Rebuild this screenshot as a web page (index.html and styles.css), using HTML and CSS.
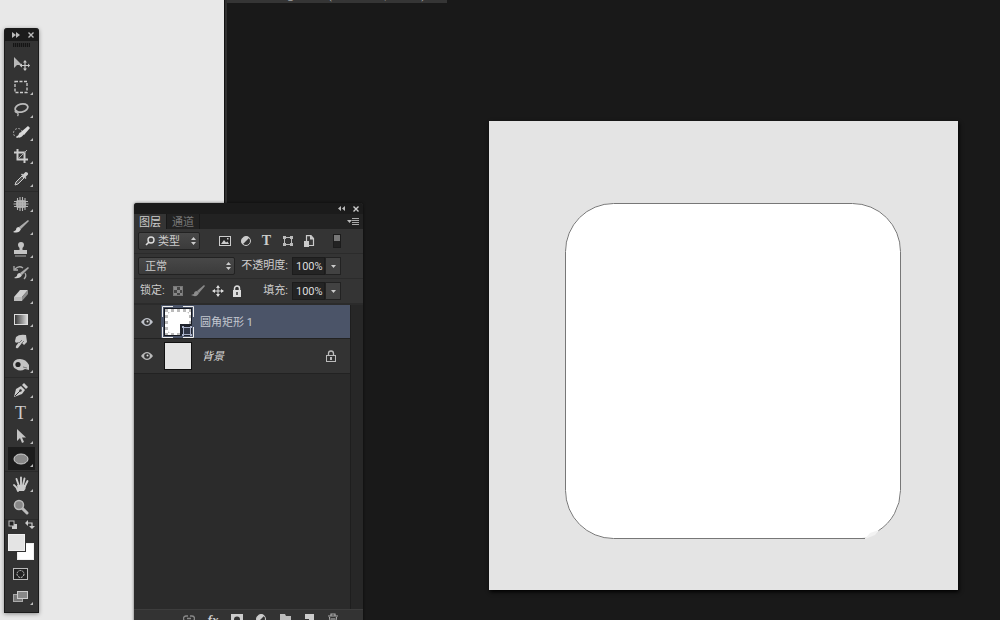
FILE: index.html
```html
<!DOCTYPE html>
<html lang="zh-CN">
<head>
<meta charset="utf-8">
<title>图层</title>
<link rel="stylesheet" href="styles.css">
</head>
<body>
<main class="desktop">
  <section class="document" aria-label="文档">
    <div class="doc-tabs"><span class="doc-tab">未标题-1 @ 100% (圆角矩形 1, RGB/8) *</span></div>
    <svg class="artboard" viewBox="0 0 469 469" role="img" aria-label="圆角矩形">
      <rect width="469" height="469" fill="#e4e4e4"/>
      <rect x="76" y="82" width="336" height="336" rx="49" fill="#fff"/>
      <path d="M376 417.500H124.500A48 48 0 0 1 76.500 369.500V130.500A48 48 0 0 1 124.500 82.500H363.500A48 48 0 0 1 411.500 130.500V369.500A48 48 0 0 1 389 410" fill="none" stroke="#777"/>
      <path d="M376 418L381 412L390 409L386 414Z" fill="#f2f2f2"/>
    </svg>
  </section>

  <aside class="toolbox" aria-label="工具">
    <header class="bar">
      <button class="mini" aria-label="展开"><svg width="8" height="6" viewBox="0 0 8 6"><path d="M0 0L4 3L0 6ZM4 0L8 3L4 6Z" fill="#bbb"/></svg></button>
      <button class="mini" aria-label="关闭"><svg width="6" height="6" viewBox="0 0 6 6"><path d="M.5 .5L5.500 5.500M5.500 .5L.5 5.500" stroke="#bbb" stroke-width="1.400"/></svg></button>
    </header>
    <div class="grip"></div>
    <div class="group">
      <button class="tool plain" aria-label="移动"><svg viewBox="0 0 18 18"><path d="M2 2V13L5 10H10Z" fill="#b8b8b8"/><path d="M13 6V15M8.500 10.500H17.500" stroke="#c8c8c8" stroke-width="1.200"/><path d="M13 5L15 7.500H11ZM13 16L11 13.500H15ZM7.500 10.500L10 8.500V12.500ZM18 10.500L16 8.500V12.500Z" fill="#c8c8c8"/></svg></button>
      <button class="tool" aria-label="矩形选框"><svg viewBox="0 0 18 18"><rect x="3" y="3.500" width="12" height="11" fill="none" stroke="#ccc" stroke-width="1.300" stroke-dasharray="3 1.500"/></svg></button>
      <button class="tool" aria-label="套索"><svg viewBox="0 0 18 18"><ellipse cx="9.500" cy="7" rx="6.500" ry="4" transform="rotate(-14 9.500 7)" fill="none" stroke="#bbb" stroke-width="1.800"/><path d="M4 9Q2 11 4.500 11.500Q6.500 10.500 4 9.500M5 11.500Q7 13 5.500 15" fill="none" stroke="#bbb" stroke-width="1.300"/></svg></button>
      <button class="tool" aria-label="快速选择"><svg viewBox="0 0 18 18"><circle cx="6" cy="9" r="4.500" fill="none" stroke="#aaa" stroke-dasharray="2 1.500"/><path d="M16 2L9 8L12 11L18 4Z" fill="#ddd"/><path d="M10 8Q7 8 6.500 11L4 13Q9 15 12 10Z" fill="#d8d8d8"/></svg></button>
      <button class="tool" aria-label="裁剪"><svg viewBox="0 0 18 18"><path d="M5.500 2V12.500H16M2 5.500H12.500V16" fill="none" stroke="#ccc" stroke-width="2"/><path d="M6 12L15 3" stroke="#aaa"/></svg></button>
      <button class="tool" aria-label="吸管"><svg viewBox="0 0 18 18"><path d="M3 15L4 12L10 6L12 8L6 14Z" fill="#555" stroke="#ccc"/><path d="M9 4.500L13.500 9L14.500 8L13.500 7L16 4.500Q16.500 2 13.500 2L11 4.500L10 3.500Z" fill="#ccc"/></svg></button>
    </div>
    <div class="group">
      <button class="tool" aria-label="修复"><svg viewBox="0 0 18 18"><rect x="4" y="5" width="10" height="8" rx="2" fill="#a0a0a0"/><path d="M5.500 3V15M8 2V16M10.500 2V16M13 3V15M2 6.500H16M1.500 9H16.500M2 11.500H16" stroke="#b5b5b5" stroke-width="1.100"/></svg></button>
      <button class="tool" aria-label="画笔"><svg viewBox="0 0 18 18"><path d="M16 2L7 9L9 11L17 3Z" fill="#aaa"/><path d="M7 9Q4 9 4 12L1 14Q7 16 9 11Z" fill="#d5d5d5"/></svg></button>
      <button class="tool" aria-label="图章"><svg viewBox="0 0 18 18"><path d="M6 4A3 3 0 0 1 12 4Q12 5.500 10.500 7V9H15V13H2V9H7.500V7Q6 5.500 6 4Z" fill="#c4c4c4"/><path d="M3 15H14" stroke="#aaa"/></svg></button>
      <button class="tool" aria-label="历史画笔"><svg viewBox="0 0 18 18"><path d="M3 5Q7 1 11 4M2 2V6H6M13 9Q15 12 12 15" fill="none" stroke="#aaa" stroke-width="1.300"/><path d="M16 3L8 9L10 11L17 4Z" fill="#aaa"/><path d="M8 9Q5 9 5 12L2 14Q8 15 10 11Z" fill="#ccc"/></svg></button>
      <button class="tool" aria-label="橡皮擦"><svg viewBox="0 0 18 18"><path d="M8 3H16L10 10H2Z" fill="#d0d0d0"/><path d="M2 10H10V14H2Z" fill="#bbb"/><path d="M10 10L16 3V7L10 14Z" fill="#8e8e8e"/></svg></button>
      <button class="tool" aria-label="渐变"><svg viewBox="0 0 18 18"><defs><linearGradient id="fade"><stop stop-color="#333"/><stop offset="1" stop-color="#ddd"/></linearGradient></defs><rect x="2.500" y="4.500" width="13" height="10" fill="url(#fade)" stroke="#ddd"/></svg></button>
      <button class="tool" aria-label="涂抹"><svg viewBox="0 0 18 18"><path d="M4 4Q7 1 14 2L15 9L12 12L10 10L6 15Q3 16 4 13L7 9Q3 11 3 8Z" fill="#c8c8c8"/><path d="M7 10L10 7M9 11L12 8" stroke="#777"/></svg></button>
      <button class="tool" aria-label="海绵"><svg viewBox="0 0 18 18"><path d="M1 8Q2 3 8 3Q14 3 17 9V14L13 13Q8 16 4 13Q1 12 1 8Z" fill="#c4c4c4"/><circle cx="6" cy="8.500" r="2.600" fill="#222"/><path d="M11 11L15 12" stroke="#777"/></svg></button>
    </div>
    <div class="group">
      <button class="tool" aria-label="钢笔"><svg viewBox="0 0 18 18"><path d="M2 16L4 8L9 5L13 9L10 13Z" fill="#ccc"/><path d="M10 4L12 2L16 6L14 8Z" fill="#ccc"/><path d="M3 15L8 10" stroke="#333"/><circle cx="8.500" cy="9.500" r="1.200" fill="#333"/></svg></button>
      <button class="tool letter" aria-label="文字">T</button>
      <button class="tool" aria-label="路径选择"><svg viewBox="0 0 18 18"><path d="M5 2V14L8 11L10 16L12 15L10 10.500H14Z" fill="#c4c4c4"/></svg></button>
      <button class="tool active" aria-label="椭圆"><svg viewBox="0 0 18 18"><ellipse cx="9" cy="9" rx="7" ry="5" fill="#888" stroke="#d0d0d0"/></svg></button>
    </div>
    <div class="group">
      <button class="tool" aria-label="抓手"><svg viewBox="0 0 18 18"><path d="M6 16Q5 12 2 10M7 11L4.500 4M9 10V2.500M11 10L12.500 3.500M13 11L15.500 6" stroke="#ccc" stroke-width="1.900" stroke-linecap="round" fill="none"/><path d="M5 10H14Q14 14 12 16H6Z" fill="#ccc"/></svg></button>
      <button class="tool plain" aria-label="缩放"><svg viewBox="0 0 18 18"><path d="M10 10L15 15" stroke="#bbb" stroke-width="3" stroke-linecap="round"/><circle cx="7" cy="7" r="4.500" fill="#888" stroke="#bbb" stroke-width="1.500"/></svg></button>
    </div>
    <div class="colors">
      <div class="color-actions">
        <button class="mini" aria-label="默认颜色"><svg width="10" height="9" viewBox="0 0 10 9"><path d="M4 4H9V9H4Z" fill="#ccc"/><rect x="1" y="1" width="5" height="5" fill="#222" stroke="#bbb"/></svg></button>
        <button class="mini" aria-label="切换颜色"><svg width="10" height="9" viewBox="0 0 10 9"><path d="M2 3H7V7" fill="none" stroke="#ccc" stroke-width="1.200"/><path d="M0 3L3 0V6ZM7 9L4 6H10Z" fill="#ccc"/></svg></button>
      </div>
      <div class="swatches">
        <button class="swatch back" aria-label="背景色"></button>
        <button class="swatch front" aria-label="前景色"></button>
      </div>
    </div>
    <button class="tool plain" aria-label="快速蒙版"><svg viewBox="0 0 18 18"><rect x="1.500" y="3.500" width="14" height="11" fill="#222" stroke="#bbb"/><circle cx="8.500" cy="9" r="3.500" fill="#222" stroke="#ccc" stroke-dasharray="2 1"/></svg></button>
    <button class="tool" aria-label="屏幕模式"><svg viewBox="0 0 18 18"><rect x="1.500" y="6.500" width="9" height="7" fill="#777" stroke="#aaa"/><rect x="5.500" y="3.500" width="10" height="7" fill="#888" stroke="#ccc"/></svg></button>
  </aside>

  <section class="panel" aria-label="图层">
    <header class="bar">
      <button class="mini" aria-label="折叠"><svg width="7" height="5" viewBox="0 0 7 5"><path d="M3 0V5L0 2.500ZM7 0V5L4 2.500Z" fill="#bbb"/></svg></button>
      <button class="mini" aria-label="关闭面板"><svg width="6" height="6" viewBox="0 0 6 6"><path d="M.5 .5L5.500 5.500M5.500 .5L.5 5.500" stroke="#ccc" stroke-width="1.400"/></svg></button>
    </header>
    <nav class="tabs">
      <button class="tab current">图层</button>
      <button class="tab">通道</button>
      <button class="mini menu" aria-label="面板菜单"><svg width="12" height="8" viewBox="0 0 12 8"><path d="M0 2H5L2.500 5Z" fill="#bbb"/><path d="M5 .5H12M5 2.500H12M5 4.500H12M5 6.500H12" stroke="#aaa"/></svg></button>
    </nav>
    <div class="row filters">
      <label class="pick kind">
        <svg width="10" height="10" viewBox="0 0 10 10"><circle cx="6" cy="4" r="3" fill="none" stroke="#ddd" stroke-width="1.400"/><path d="M4 6L1 9" stroke="#ddd" stroke-width="1.600"/></svg>
        <select aria-label="滤镜类型"><option>类型</option></select>
        <svg width="5" height="8" viewBox="0 0 5 8"><path d="M0 3L2.500 0L5 3ZM0 5H5L2.500 8Z" fill="#ccc"/></svg>
      </label>
      <div class="filter-icons">
        <button class="icon" aria-label="像素图层"><svg viewBox="0 0 12 12"><rect x=".5" y="1.500" width="11" height="9" fill="#282828" stroke="#ccc"/><path d="M2 9L5 5L7 7.500L8.500 6.500L10 9Z" fill="#ccc"/><path d="M8 3H9.500V4.500H8Z" fill="#ccc"/></svg></button>
        <button class="icon" aria-label="调整图层"><svg viewBox="0 0 12 12"><circle cx="6" cy="6" r="4.500" fill="#333" stroke="#ccc"/><path d="M9.500 2.500A5 5 0 0 0 2.500 9.500Z" fill="#ccc"/></svg></button>
        <button class="icon small-letter" aria-label="文字图层">T</button>
        <button class="icon" aria-label="形状图层"><svg viewBox="0 0 12 12"><rect x="2.500" y="2.500" width="7" height="7" fill="none" stroke="#bbb"/><path d="M1 1H4V4H1ZM8 1H11V4H8ZM1 8H4V11H1ZM8 8H11V11H8Z" fill="#bbb"/></svg></button>
        <button class="icon" aria-label="智能对象"><svg viewBox="0 0 12 12"><path d="M3.500 6V.600H8L10.500 3.500V10.500H5" fill="#3a3a3a" stroke="#ccc" stroke-width="1.200"/><path d="M7 0V4.500H11Z" fill="#ccc"/><path d="M1 6H6V12H1Z" fill="#ccc"/></svg></button>
      </div>
      <button class="toggle" aria-label="滤镜开关"></button>
    </div>
    <div class="row">
      <label class="pick blend">
        <select aria-label="混合模式"><option>正常</option></select>
        <svg width="5" height="8" viewBox="0 0 5 8"><path d="M0 3L2.500 0L5 3ZM0 5H5L2.500 8Z" fill="#ccc"/></svg>
      </label>
      <div class="amount">
        <label for="opacity">不透明度:</label>
        <input id="opacity" type="text" value="100%">
        <button class="drop" aria-label="调整不透明度"><svg width="5" height="3" viewBox="0 0 5 3"><path d="M0 0H5L2.500 3Z" fill="#ccc"/></svg></button>
      </div>
    </div>
    <div class="row">
      <div class="locks">
        <span>锁定:</span>
        <button class="icon" aria-label="锁定透明像素"><svg viewBox="0 0 12 12"><rect x="1.500" y="1.500" width="9" height="9" fill="#444" stroke="#777"/><path d="M2 2H5V5H2ZM5 5H8V8H5ZM8 2H10V5H8ZM2 8H5V10H2ZM8 8H10V10H8Z" fill="#888"/></svg></button>
        <button class="icon brush" aria-label="锁定图像像素"><svg viewBox="0 0 14 12"><path d="M13 0L6 6L8 8L14 1Z" fill="#888"/><path d="M6 6Q3 6 3 9L0 10Q6 13 8 8Z" fill="#8c8c8c"/></svg></button>
        <button class="icon" aria-label="锁定位置"><svg viewBox="0 0 12 12"><path d="M6 1V11M1 6H11" stroke="#ddd"/><path d="M6 0L8 3H4ZM6 12L4 9H8ZM0 6L3 4V8ZM12 6L9 4V8Z" fill="#ddd"/></svg></button>
        <button class="icon" aria-label="锁定全部"><svg viewBox="0 0 12 12"><path d="M3.500 6V3.500A2.500 2.500 0 0 1 8.500 3.500V6" fill="none" stroke="#ddd" stroke-width="1.500"/><path d="M2 5H10V12H2Z" fill="#ddd"/><path d="M6 7V10" stroke="#333" stroke-width="1.500"/></svg></button>
      </div>
      <div class="amount">
        <label for="fill">填充:</label>
        <input id="fill" type="text" value="100%">
        <button class="drop" aria-label="调整填充"><svg width="5" height="3" viewBox="0 0 5 3"><path d="M0 0H5L2.500 3Z" fill="#ccc"/></svg></button>
      </div>
    </div>
    <div class="list-area">
      <ul class="layers">
        <li class="layer selected">
          <button class="eye" aria-label="切换可见性"><svg viewBox="0 0 12 10"><path d="M0 5Q6 -3 12 5Q6 13 0 5Z" fill="#c0c4cc"/><circle cx="6" cy="5" r="2.800" fill="#333"/><circle cx="6.500" cy="4.500" r="1" fill="#ddd"/></svg></button>
          <svg class="thumb" viewBox="0 0 32 32"><defs><pattern id="checks" width="6" height="6" patternUnits="userSpaceOnUse"><path d="M0 0H6V6H0Z" fill="#fff"/><path d="M0 0H3V3H0ZM3 3H6V6H3Z" fill="#bbb"/></pattern></defs><rect x="2.500" y="2.500" width="27" height="27" fill="url(#checks)" stroke="#151820"/><rect x="6" y="6" width="21" height="21" rx="3" fill="#fff"/><path d="M18 18H30V30H18Z" fill="#20242e"/><path d="M21.500 21.500H28.500V28.500H21.500Z" fill="#303646" stroke="#a8b0c8"/><path d="M20 20H22V22H20ZM28 20H30V22H28ZM20 28H22V30H20ZM28 28H30V30H28Z" fill="#a8b0c8"/><path d="M.5 11V.5H11M21 .5H31.500V11M.5 21V31.500H11M21 31.500H31.500V21" fill="none" stroke="#eee"/></svg>
          <span class="name">圆角矩形 1</span>
        </li>
        <li class="layer">
          <button class="eye" aria-label="切换可见性"><svg viewBox="0 0 12 10"><path d="M0 5Q6 -3 12 5Q6 13 0 5Z" fill="#bbb"/><circle cx="6" cy="5" r="2.800" fill="#333"/><circle cx="6.500" cy="4.500" r="1" fill="#ddd"/></svg></button>
          <svg class="thumb" viewBox="0 0 32 32"><rect x="2.500" y="2.500" width="27" height="27" fill="#e4e4e4" stroke="#111"/></svg>
          <span class="name italic">背景</span>
          <svg class="lock" viewBox="0 0 12 12"><path d="M3.500 5V3.500A2.500 2.500 0 0 1 8.500 3.500V5" fill="none" stroke="#bbb" stroke-width="1.300"/><rect x="1.500" y="5.500" width="9" height="6" fill="#333" stroke="#bbb"/><path d="M5 7H7V10H5Z" fill="#bbb"/></svg>
        </li>
      </ul>
      <div class="scroll"></div>
    </div>
    <footer class="actions">
      <button class="icon" aria-label="链接图层"><svg viewBox="0 0 12 12"><path d="M5 3H3A2.500 2.500 0 0 0 3 8H5M7 3H9A2.500 2.500 0 0 1 9 8H7M4 5.500H8" fill="none" stroke="#888" stroke-width="1.300"/></svg></button>
      <button class="icon fx" aria-label="图层样式">fx</button>
      <button class="icon" aria-label="添加蒙版"><svg viewBox="0 0 12 12"><path d="M0 1H12V12H0Z" fill="#ccc"/><circle cx="6" cy="6.500" r="3" fill="#333"/></svg></button>
      <button class="icon" aria-label="新建调整图层"><svg viewBox="0 0 12 12"><circle cx="6" cy="6" r="4.500" fill="#333" stroke="#ccc"/><path d="M9.500 2.500A5 5 0 0 0 2.500 9.500Z" fill="#ccc"/></svg></button>
      <button class="icon" aria-label="新建组"><svg viewBox="0 0 12 12"><path d="M1 1H6L7 3H12V11H1Z" fill="#bbb"/></svg></button>
      <button class="icon" aria-label="新建图层"><svg viewBox="0 0 12 12"><path d="M2 1H11V11H6V6H2Z" fill="#ccc"/><path d="M2 7L5 11V7Z" fill="#aaa"/></svg></button>
      <button class="icon" aria-label="删除图层"><svg viewBox="0 0 12 12"><path d="M1 3H11M4 3V1H8V3M2.500 4L3.500 11.500H8.500L9.500 4M5 5V10M7 5V10" fill="none" stroke="#aaa" stroke-width="1.200"/></svg></button>
    </footer>
  </section>
</main>
</body>
</html>
```
FILE: styles.css
```css
* { box-sizing: border-box; }
body {
  margin: 0;
  font: 11px/14px Roboto, "Noto Sans CJK SC", sans-serif;
  color: #ccc;
}
button, input, select {
  margin: 0;
  padding: 0;
  border: 0;
  background: none;
  color: inherit;
  font: inherit;
  appearance: none;
}
svg { display: block; flex: none; }

.desktop {
  position: relative;
  height: 100vh;
  overflow: hidden;
  background: #e8e8e8;
}

/* Document window */
.document {
  position: absolute;
  top: 0;
  right: 0;
  bottom: 0;
  left: 224px;
  border-left: 1px solid #111;
  background: #191919;
  box-shadow: inset 2px 0 #303030;
}
.doc-tabs {
  display: flex;
  align-items: flex-end;
  height: 3px;
  margin-left: 2px;
  overflow: hidden;
}
.doc-tab {
  flex: none;
  width: 220px;
  padding-left: 14px;
  background: #353535;
  white-space: nowrap;
  color: #aaa;
}
.artboard {
  position: absolute;
  top: 121px;
  left: 264px;
  width: 469px;
  height: 469px;
  box-shadow: 1px 2px 4px #000;
}

/* Shared window pieces */
.bar {
  display: flex;
  align-items: center;
  background: #1b1b1b;
}
.mini, .icon, .tool {
  display: flex;
  align-items: center;
  justify-content: center;
  flex: none;
}
.icon { width: 12px; height: 14px; }
.icon svg { width: 12px; height: 12px; }

/* Toolbox */
.toolbox {
  position: absolute;
  top: 28px;
  left: 4px;
  display: flex;
  flex-direction: column;
  width: 35px;
  padding-bottom: 4px;
  border: 1px solid #1b1b1b;
  border-top: 0;
  border-radius: 3px 3px 0 0;
  background: #333;
  box-shadow: 0 1px 4px rgba(0, 0, 0, .4);
}
.toolbox .bar {
  justify-content: space-between;
  height: 13px;
  padding: 0 4px 0 7px;
  border-radius: 3px 3px 0 0;
}
.grip {
  width: 17px;
  height: 4px;
  margin: 2px auto 5px;
  background: repeating-linear-gradient(90deg, #151515 0 1px, #2a2a2a 1px 2px);
}
.group {
  padding-bottom: 1px;
  border-bottom: 1px solid #292929;
}
.tool {
  position: relative;
  width: 27px;
  height: 23px;
  margin-left: 3px;
  padding-right: 2px;
}
.tool svg { width: 18px; height: 18px; }
.tool::after {
  content: "";
  position: absolute;
  right: 2px;
  bottom: 3px;
  border: solid transparent;
  border-width: 0 0 3px 3px;
  border-bottom-color: #bbb;
}
.tool.plain::after { display: none; }
.tool.active { background: #1c1c1c; }
.letter { font: 18px/20px "Liberation Serif", serif; color: #ccc; }
.colors { height: 42px; padding: 0 3px; }
.color-actions {
  display: flex;
  align-items: flex-start;
  justify-content: space-between;
  height: 14px;
}
.swatches {
  position: relative;
  width: 26px;
  height: 26px;
}
.swatch {
  position: absolute;
  width: 17px;
  height: 17px;
  border: 1px solid #f0f0f0;
}
.front { top: 0; left: 0; background: #e4e4e4; box-shadow: 0 0 0 1px #333; }
.back { right: 0; bottom: 0; background: #fff; }

/* Layers panel */
.panel {
  position: absolute;
  top: 203px;
  bottom: -12px;
  left: 134px;
  display: flex;
  flex-direction: column;
  width: 229px;
  border-radius: 3px 3px 0 0;
  background: #343434;
  box-shadow: 0 0 3px rgba(0, 0, 0, .6);
}
.panel .bar {
  justify-content: flex-end;
  gap: 8px;
  height: 11px;
  padding-right: 4px;
  border-radius: 3px 3px 0 0;
}
.tabs {
  display: flex;
  height: 15px;
  background: #222;
}
.tab {
  width: 33px;
  padding-top: 2px;
  border-right: 1px solid #181818;
  color: #777;
}
.tab.current { background: #343434; color: #ccc; }
.menu { margin: 0 4px 0 auto; }
.row {
  display: flex;
  align-items: center;
  justify-content: space-between;
  height: 25px;
  padding: 0 22px 0 4px;
  border-bottom: 1px solid #2b2b2b;
}
.pick {
  display: flex;
  align-items: center;
  gap: 3px;
  height: 18px;
  padding: 0 3px 0 6px;
  border: 1px solid #222;
  border-radius: 2px;
  background: linear-gradient(#484848, #3b3b3b);
}
.pick select { flex: 1; min-width: 0; height: 16px; padding-top: 1px; }
.kind { width: 62px; }
.blend { width: 97px; }
.filter-icons { display: flex; gap: 9px; }
.small-letter { font: bold 14px/14px "Liberation Serif", serif; }
.toggle {
  width: 8px;
  height: 14px;
  border: 1px solid #1c1c1c;
  background: linear-gradient(#777 0 50%, #222 50%);
}
.amount { display: flex; align-items: center; height: 18px; }
.amount label { margin-right: 4px; }
.amount input {
  width: 33px;
  height: 18px;
  padding-left: 3px;
  border: 1px solid #1c1c1c;
  background: #242424;
  color: #ddd;
}
.drop {
  display: flex;
  align-items: center;
  justify-content: center;
  width: 16px;
  height: 18px;
  border: 1px solid #222;
  background: #424242;
}
.locks { display: flex; align-items: center; gap: 7px; padding-left: 2px; }
.brush, .brush svg { width: 14px; }

.list-area {
  display: flex;
  flex: 1;
  padding-top: 1px;
  background: #2b2b2b;
}
.layers {
  flex: 1;
  margin: 0;
  padding: 0;
  list-style: none;
}
.layer {
  display: flex;
  align-items: center;
  height: 35px;
  padding-right: 13px;
  border-bottom: 1px solid #222;
  background: #333;
}
.layer.selected {
  height: 34px;
  background: linear-gradient(90deg, #333 27px, #4b5468 27px);
}
.eye { width: 12px; margin: 0 14px 0 7px; flex: none; }
.eye svg { width: 12px; height: 10px; }
.thumb { width: 32px; height: 32px; margin-left: -5px; }
.name { margin-left: 6px; padding-top: 2px; }
.selected .name { color: #c4c8d0; }
.italic { margin-left: 8px; font-style: italic; color: #ddd; }
.lock { width: 12px; height: 12px; margin-left: auto; }
.scroll { width: 13px; border-left: 1px solid #1e1e1e; background: #272727; }
.actions {
  display: flex;
  justify-content: flex-end;
  gap: 12px;
  height: 23px;
  padding: 2px 24px 0;
  border-top: 1px solid #3d3d3d;
  background: #333;
}
.fx { font: italic bold 13px/13px "Liberation Serif", serif; }
```
